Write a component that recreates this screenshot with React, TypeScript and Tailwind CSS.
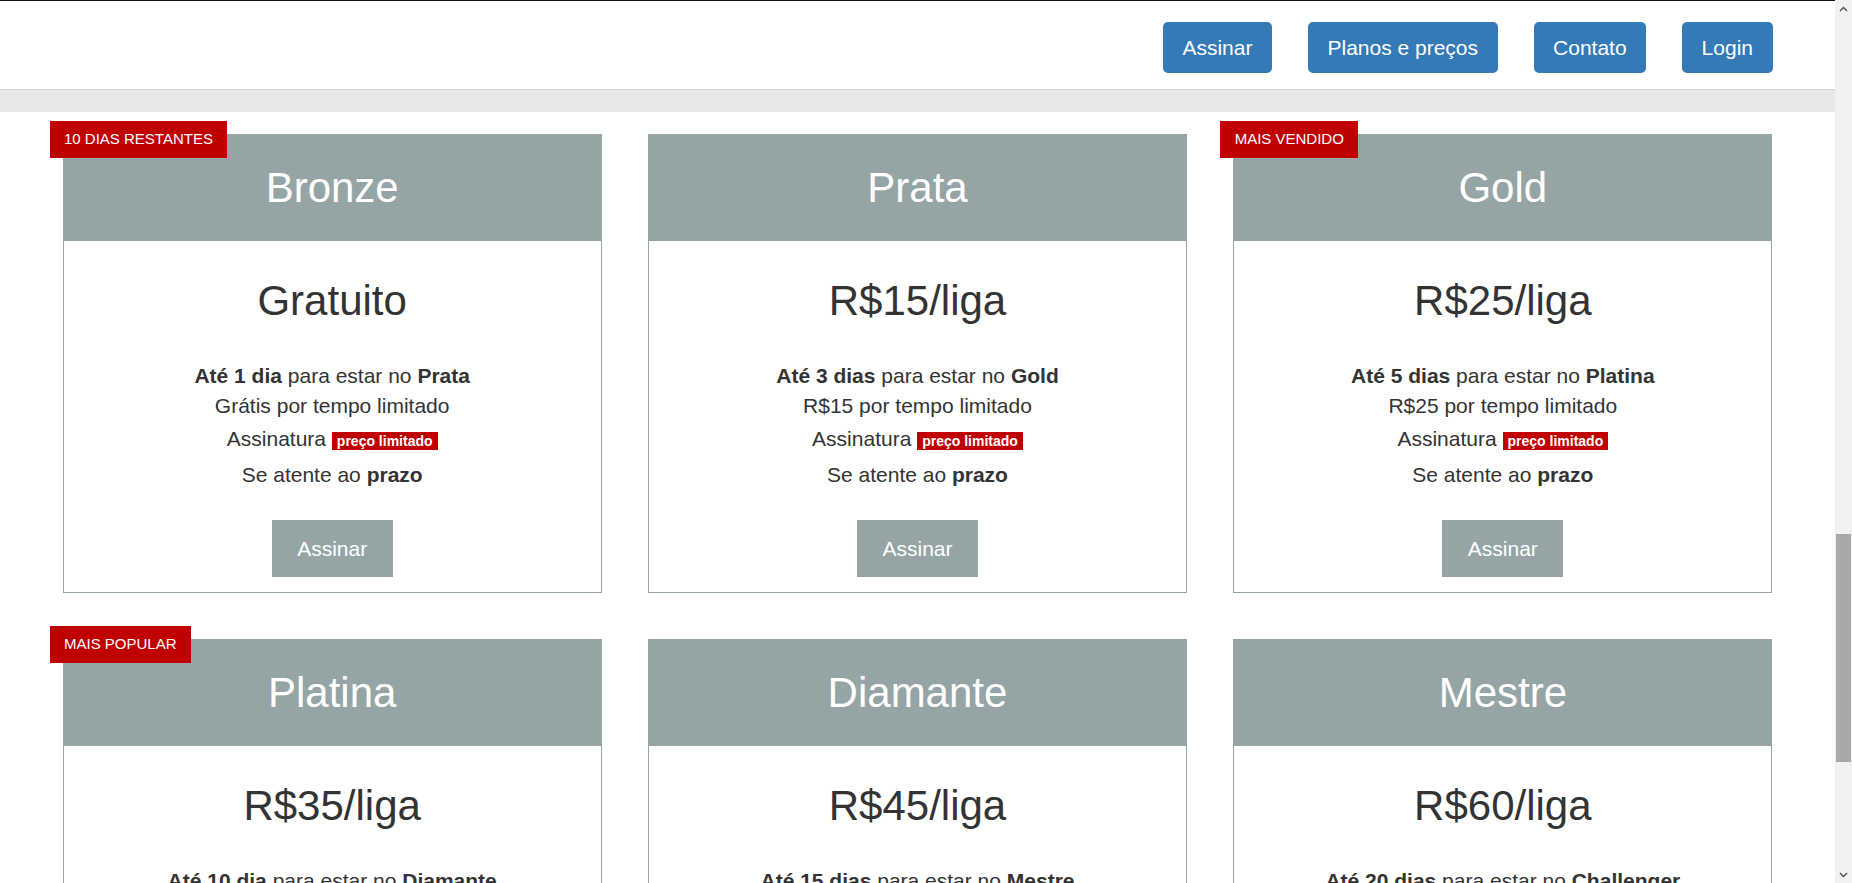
import React from "react";

type Plan = {
  name: string;
  price: string;
  days: string;
  target: string;
  promo: string;
  badge?: string;
};

const plans: Plan[] = [
  { name: "Bronze", price: "Gratuito", days: "Até 1 dia", target: "Prata", promo: "Grátis por tempo limitado", badge: "10 DIAS RESTANTES" },
  { name: "Prata", price: "R$15/liga", days: "Até 3 dias", target: "Gold", promo: "R$15 por tempo limitado" },
  { name: "Gold", price: "R$25/liga", days: "Até 5 dias", target: "Platina", promo: "R$25 por tempo limitado", badge: "MAIS VENDIDO" },
  { name: "Platina", price: "R$35/liga", days: "Até 10 dia", target: "Diamante", promo: "R$35 por tempo limitado", badge: "MAIS POPULAR" },
  { name: "Diamante", price: "R$45/liga", days: "Até 15 dias", target: "Mestre", promo: "R$45 por tempo limitado" },
  { name: "Mestre", price: "R$60/liga", days: "Até 20 dias", target: "Challenger", promo: "R$60 por tempo limitado" },
];

function Card({ plan }: { plan: Plan }) {
  return (
    <div className="relative border border-[#95a5a6] bg-white">
      {plan.badge && (
        <div className="absolute left-[-14px] top-[-14px] z-10 flex h-[37px] items-center bg-[#c00000] px-[14.5px] text-[15px] text-white">
          {plan.badge}
        </div>
      )}
      <div className="flex h-[106px] items-center justify-center bg-[#95a5a6] text-[42px] leading-[48px] text-white">
        {plan.name}
      </div>
      <div className="flex flex-col items-center pt-[36px] pb-[15px] text-[#333333]">
        <div className="text-[42px] leading-[48px]">{plan.price}</div>
        <div className="mt-[36px] flex flex-col items-center text-[21px] leading-[30px]">
          <div>
            <b className="font-bold">{plan.days}</b> para estar no <b className="font-bold">{plan.target}</b>
          </div>
          <div>{plan.promo}</div>
          <div className="mt-[3px]">
            Assinatura{" "}
            <span className="bg-[#c00000] px-[5px] py-[1px] align-baseline text-[14px] font-bold text-white">
              preço limitado
            </span>
          </div>
          <div className="mt-[4px]">
            Se atente ao <b className="font-bold">prazo</b>
          </div>
        </div>
        <button className="mt-[30px] flex h-[57px] w-[121px] items-center justify-center bg-[#95a5a6] text-[21px] text-white">
          Assinar
        </button>
      </div>
    </div>
  );
}

function Chevron({ up }: { up: boolean }) {
  return (
    <svg width="9" height="6" viewBox="0 0 9 6">
      {up ? (
        <polyline points="1,5 4.5,1.5 8,5" fill="none" stroke="#505050" strokeWidth="1.4" />
      ) : (
        <polyline points="1,1 4.5,4.5 8,1" fill="none" stroke="#505050" strokeWidth="1.4" />
      )}
    </svg>
  );
}

export default function App() {
  return (
    <div
      className="flex h-[883px] w-full overflow-hidden bg-white"
      style={{ fontFamily: '"Liberation Sans", Arial, sans-serif' }}
    >
      <div className="flex min-w-0 flex-1 flex-col overflow-hidden border-t border-[#0d121c]">
        <header className="h-[89px] shrink-0 border-b border-[#d0d0d0] bg-white">
          <nav className="mx-auto flex w-[1710px] justify-end gap-[36px] pt-[21px]">
            {["Assinar", "Planos e preços", "Contato", "Login"].map((t) => (
              <button
                key={t}
                className="h-[51px] rounded-[5px] bg-[#337ab7] px-[19.5px] text-[21px] text-white"
              >
                {t}
              </button>
            ))}
          </nav>
        </header>
        <div className="h-[22px] shrink-0 bg-[#e7e7e7]" />
        <main className="mx-auto grid w-[1710px] shrink-0 grid-cols-3 gap-[46px] pt-[22px]">
          {plans.map((p) => (
            <Card key={p.name} plan={p} />
          ))}
        </main>
      </div>
      <div className="flex w-[17px] shrink-0 flex-col bg-[#f1f1f1]">
        <div className="flex h-[17px] items-center justify-center">
          <Chevron up />
        </div>
        <div className="flex flex-1 flex-col">
          <div className="h-[517px]" />
          <div className="mx-auto h-[228px] w-[15px] bg-[#a8a8a8]" />
        </div>
        <div className="flex h-[17px] items-center justify-center">
          <Chevron up={false} />
        </div>
      </div>
    </div>
  );
}
